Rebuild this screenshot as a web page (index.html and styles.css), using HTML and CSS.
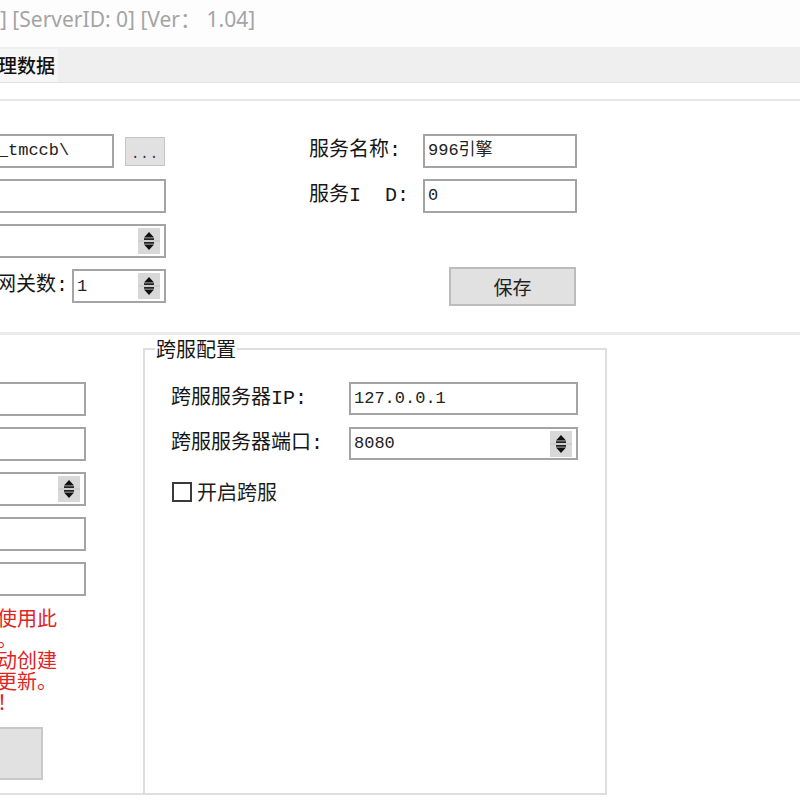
FILE: index.html
```html
<!DOCTYPE html>
<html lang="zh-CN">
<head>
    <meta charset="UTF-8">
    <title>服务配置</title>
    <link rel="stylesheet" href="styles.css">
</head>
<body>
    <div class="titlebar">
        <span class="title">] [ServerID: 0] [Ver： 1.04]</span>
    </div>

    <div class="tabbar">
        <div class="tab">管理数据</div>
    </div>

    <main class="page">
        <section class="top">
            <div class="col-left">
                <div class="row">
                    <div class="field path">D:\996\m2_tmccb\</div>
                    <button class="btn-browse">...</button>
                </div>
                <div class="row">
                    <div class="field wide"></div>
                </div>
                <div class="row">
                    <div class="field spin wide">
                        <span class="val"></span>
                        <svg class="spinner" width="22" height="26" viewBox="0 0 22 26">
                            <rect width="22" height="26" fill="#d8d8d8"/>
                            <rect x="0" y="12.5" width="22" height="1" fill="#c2c2c2"/>
                            <path d="M11 4 L16 9.5 L6 9.5 Z" fill="#111"/>
                            <rect x="6" y="10.3" width="10" height="1.6" fill="#111"/>
                            <rect x="6" y="14.1" width="10" height="1.6" fill="#111"/>
                            <path d="M6 16.5 L16 16.5 L11 22 Z" fill="#111"/>
                        </svg>
                    </div>
                </div>
                <div class="row end">
                    <label class="lbl">网关数:</label>
                    <div class="field spin gate">
                        <span class="val">1</span>
                        <svg class="spinner" width="22" height="26" viewBox="0 0 22 26">
                            <rect width="22" height="26" fill="#d8d8d8"/>
                            <rect x="0" y="12.5" width="22" height="1" fill="#c2c2c2"/>
                            <path d="M11 4 L16 9.5 L6 9.5 Z" fill="#111"/>
                            <rect x="6" y="10.3" width="10" height="1.6" fill="#111"/>
                            <rect x="6" y="14.1" width="10" height="1.6" fill="#111"/>
                            <path d="M6 16.5 L16 16.5 L11 22 Z" fill="#111"/>
                        </svg>
                    </div>
                </div>
            </div>

            <div class="col-right">
                <div class="row">
                    <label class="lbl name">服务名称:</label>
                    <div class="field short">996引擎</div>
                </div>
                <div class="row">
                    <label class="lbl name">服务I&nbsp;&nbsp;D:</label>
                    <div class="field short">0</div>
                </div>
                <div class="row"></div>
                <div class="row">
                    <button class="btn-save">保存</button>
                </div>
            </div>
        </section>

        <section class="bottom">
            <div class="group-left">
                <div class="field small"></div>
                <div class="field small"></div>
                <div class="field spin small">
                    <span class="val"></span>
                    <svg class="spinner" width="22" height="26" viewBox="0 0 22 26">
                        <rect width="22" height="26" fill="#d8d8d8"/>
                        <rect x="0" y="12.5" width="22" height="1" fill="#c2c2c2"/>
                        <path d="M11 4 L16 9.5 L6 9.5 Z" fill="#111"/>
                        <rect x="6" y="10.3" width="10" height="1.6" fill="#111"/>
                        <rect x="6" y="14.1" width="10" height="1.6" fill="#111"/>
                        <path d="M6 16.5 L16 16.5 L11 22 Z" fill="#111"/>
                    </svg>
                </div>
                <div class="field small"></div>
                <div class="field small"></div>

                <p class="note">如需使用此<br>功能。<br>会自动创建<br>自动更新。<br>注意！</p>

                <button class="btn-big"></button>
            </div>

            <fieldset class="group-right">
                <legend>跨服配置</legend>
                <div class="row">
                    <label class="lbl cross">跨服服务器IP:</label>
                    <div class="field ip">127.0.0.1</div>
                </div>
                <div class="row">
                    <label class="lbl cross">跨服服务器端口:</label>
                    <div class="field spin ip">
                        <span class="val">8080</span>
                        <svg class="spinner" width="22" height="26" viewBox="0 0 22 26">
                            <rect width="22" height="26" fill="#d8d8d8"/>
                            <rect x="0" y="12.5" width="22" height="1" fill="#c2c2c2"/>
                            <path d="M11 4 L16 9.5 L6 9.5 Z" fill="#111"/>
                            <rect x="6" y="10.3" width="10" height="1.6" fill="#111"/>
                            <rect x="6" y="14.1" width="10" height="1.6" fill="#111"/>
                            <path d="M6 16.5 L16 16.5 L11 22 Z" fill="#111"/>
                        </svg>
                    </div>
                </div>
                <div class="check-row">
                    <span class="checkbox"></span>
                    <span class="check-label">开启跨服</span>
                </div>
            </fieldset>
        </section>
    </main>
</body>
</html>
```

FILE: styles.css
```css
body {
    margin: 0;
    padding: 0;
    width: 800px;
    height: 800px;
    overflow: hidden;
    background-color: #ffffff;
    font-family: "Liberation Mono", "Noto Sans CJK SC", monospace;
    color: #1c1c1c;
}

/* window title */
.titlebar {
    height: 47px;
    box-sizing: border-box;
    padding-top: 5px;
    background-color: #fdfdfd;
}

.title {
    font-family: "Noto Sans", "Noto Sans CJK SC", sans-serif;
    font-size: 21px;
    line-height: 28px;
    color: #a4a4a4;
}

/* tab strip */
.tabbar {
    height: 36px;
    box-sizing: border-box;
    background-color: #efefef;
    border-bottom: 1px solid #e0e0e0;
    display: flex;
    align-items: flex-end;
}

.tab {
    width: 58px;
    height: 33px;
    background-color: #f6f6f6;
    overflow: hidden;
    white-space: nowrap;
    text-indent: -21px;
    font-family: "Noto Sans CJK SC", sans-serif;
    font-size: 19px;
    font-weight: 500;
    line-height: 32px;
    color: #111;
}

.page {
    margin-top: 16px;
}

/* inputs */
.field {
    box-sizing: border-box;
    height: 34px;
    border: 2px solid #a4a4a4;
    background-color: #fff;
    padding-left: 3px;
    font-size: 17px;
    line-height: 29px;
    white-space: nowrap;
    overflow: hidden;
    color: #222;
}

.spin {
    display: flex;
    align-items: center;
    justify-content: space-between;
    padding-right: 4px;
}

.spinner {
    flex: none;
}

.lbl {
    font-size: 20px;
    line-height: 34px;
    white-space: nowrap;
    color: #161616;
}

/* upper part */
.top {
    display: flex;
    border-top: 2px solid #e6e6e6;
    border-bottom: 3px solid #ebebeb;
    padding: 33px 0 29px 0;
}

.row {
    display: flex;
    align-items: center;
    height: 34px;
    margin-bottom: 11px;
}

.row:last-child {
    margin-bottom: 0;
}

.row.end {
    justify-content: flex-end;
    gap: 4px;
}

.col-left {
    margin-left: -100px;
    width: 266px;
}

.path {
    width: 214px;
    padding-left: 4px;
}

.wide {
    width: 266px;
}

.gate {
    width: 94px;
}

.btn-browse {
    margin-left: 11px;
    width: 40px;
    height: 29px;
    background-color: #e1e1e1;
    border: 1px solid #c6c6c6;
    font-family: "Liberation Mono", monospace;
    font-size: 14px;
    letter-spacing: 1px;
    padding: 6px 0 0 0;
    color: #333;
}

.col-right {
    margin-left: 143px;
    width: 270px;
}

.lbl.name {
    width: 114px;
}

.short {
    width: 154px;
}

.btn-save {
    margin-left: 140px;
    width: 127px;
    height: 39px;
    background-color: #e1e1e1;
    border: 2px solid #bcbcbc;
    font-family: "Noto Sans CJK SC", sans-serif;
    font-size: 19px;
    color: #222;
}

/* lower part */
.bottom {
    display: flex;
    height: 460px;
}

.group-left {
    margin-left: -100px;
    width: 243px;
    box-sizing: border-box;
    padding-top: 47px;
    border-bottom: 2px solid #e0e0e0;
}

.small {
    width: 186px;
    margin-bottom: 11px;
}

.note {
    margin: 0 0 15px 57px;
    font-family: "Noto Sans CJK SC", sans-serif;
    font-size: 20px;
    line-height: 21px;
    color: #e02424;
    white-space: nowrap;
}

.btn-big {
    display: block;
    width: 143px;
    height: 53px;
    background-color: #e1e1e1;
    border: 2px solid #c8c8c8;
}

.group-right {
    margin: 2px 0 0 0;
    padding: 21px 0 0 26px;
    width: 464px;
    box-sizing: border-box;
    height: 458px;
    border: 2px solid #dedede;
    min-width: 0;
}

.group-right legend {
    margin-left: -16px;
    padding: 0 1px;
    font-family: "Noto Sans CJK SC", sans-serif;
    font-size: 20px;
    line-height: 24px;
    color: #161616;
}

.group-right .row {
    margin-bottom: 12px;
    height: 33px;
}

.lbl.cross {
    width: 178px;
}

.ip {
    width: 229px;
    height: 33px;
}

.check-row {
    display: flex;
    align-items: center;
    gap: 5px;
    margin-top: 20px;
    margin-left: 1px;
}

.checkbox {
    width: 20px;
    height: 20px;
    box-sizing: border-box;
    border: 2px solid #3a3a3a;
    background-color: #fff;
}

.check-label {
    font-family: "Noto Sans CJK SC", sans-serif;
    font-size: 20px;
    line-height: 24px;
}
```
